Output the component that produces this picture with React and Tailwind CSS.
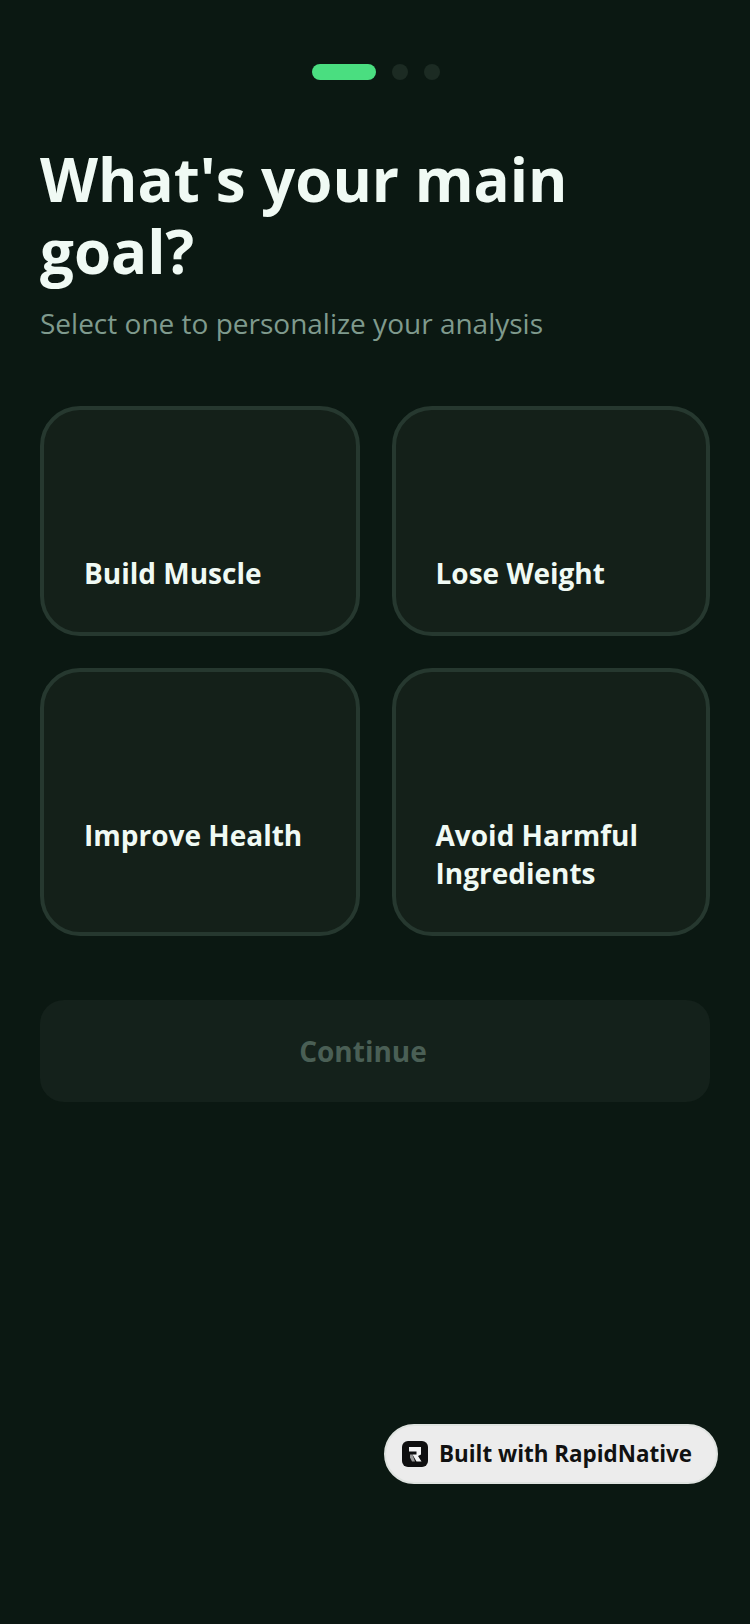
function Card({ label }) {
  return (
    <div className="rounded-[40px] border-4 border-[#26382f] bg-[#142019] p-10">
      <div className="h-20 mb-6" />
      <p className="text-[28px] leading-[38px] font-bold text-[#f0faf4]">{label}</p>
    </div>
  );
}

function Logo() {
  return (
    <svg width="26" height="26" viewBox="0 0 26 26" className="shrink-0">
      <rect width="26" height="26" rx="6" fill="#0f0f10" />
      <path d="M7 6H19V13.5L16 15L19.5 20.5H14.5L10.5 13.5H14.5V10.5H7Z" fill="#f4f4f4" />
      <path d="M8 13.5H10.5L13 20.5H10L8 16.5Z" fill="#9a9a9a" />
    </svg>
  );
}

export default function App() {
  return (
    <div className="relative min-h-[1624px] bg-[#0b1812] px-10 pt-16 font-['Open_Sans',sans-serif]">
      <div className="flex justify-center gap-4 pl-0.5">
        <div className="h-4 w-16 rounded-full bg-[#4ade80]" />
        <div className="size-4 rounded-full bg-[#1c2b23]" />
        <div className="size-4 rounded-full bg-[#1c2b23]" />
      </div>

      <h1 className="mt-[63px] text-[60px] leading-[72px] font-bold text-[#f0faf4]">
        What's your main goal?
      </h1>
      <p className="mt-[17px] text-[28px] leading-[38px] text-[#7f9a8d]">
        Select one to personalize your analysis
      </p>

      <div className="mt-16 grid grid-cols-[319.5px_1fr] gap-8">
        <Card label="Build Muscle" />
        <Card label="Lose Weight" />
        <Card label="Improve Health" />
        <Card label="Avoid Harmful Ingredients" />
      </div>

      <div className="mt-16 flex h-[102px] items-center justify-center rounded-3xl bg-[#14211b] pr-6">
        <span className="text-[28px] font-bold text-[#4a5f55]">Continue</span>
      </div>

      <div className="absolute left-[384px] top-[1424px] flex h-[60px] w-[334px] items-center gap-[11px] rounded-full border-2 border-[#dfe3e0] bg-[#ececec] pl-[16px]">
        <Logo />
        <span className="text-[22.4px] font-bold text-[#111]">Built with RapidNative</span>
      </div>
    </div>
  );
}
